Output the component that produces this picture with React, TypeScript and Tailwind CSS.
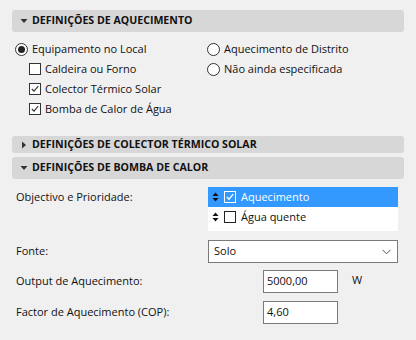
import React from "react";

const font = { fontFamily: '"Segoe UI", "Open Sans", "Noto Sans", sans-serif' };

function Caret({ open }: { open: boolean }) {
  return open ? (
    <svg width="8" height="8" viewBox="0 0 8 8" className="shrink-0">
      <path d="M0.5 2 L7.5 2 L4 6 Z" fill="#333" />
    </svg>
  ) : (
    <svg width="8" height="8" viewBox="0 0 8 8" className="shrink-0">
      <path d="M2 0.5 L6 4 L2 7.5 Z" fill="#333" />
    </svg>
  );
}

function Header({ title, open, h }: { title: string; open: boolean; h: string }) {
  return (
    <div className={`flex items-center gap-[4px] rounded-[3px] bg-[#d7d7d7] pl-[8px] ${h}`}>
      <Caret open={open} />
      <span className="text-[10.6px] font-bold text-[#111]">{title}</span>
    </div>
  );
}

function Radio({ checked, label }: { checked?: boolean; label: string }) {
  return (
    <div className="flex h-5 items-center gap-[4px]">
      <span className="flex h-[13px] w-[13px] items-center justify-center rounded-full border border-[#333] bg-white">
        {checked && <span className="h-[7px] w-[7px] rounded-full bg-[#222]" />}
      </span>
      <span>{label}</span>
    </div>
  );
}

function Check({ checked, label }: { checked?: boolean; label: string }) {
  return (
    <div className="flex h-5 items-center gap-[4px] pl-[14px]">
      <span className="flex h-[12px] w-[12px] items-center justify-center border border-[#333] bg-white">
        {checked && (
          <svg width="10" height="10" viewBox="0 0 10 10">
            <path d="M1.8 5 L4 7.2 L8.2 2.2" stroke="#333" strokeWidth="1.1" fill="none" />
          </svg>
        )}
      </span>
      <span>{label}</span>
    </div>
  );
}

function Updown({ color }: { color: string }) {
  return (
    <svg width="7" height="10" viewBox="0 0 7 10" className="shrink-0">
      <path d="M0.5 4 L3.5 0.5 L6.5 4 Z M0.5 6 L3.5 9.5 L6.5 6 Z" fill={color} />
    </svg>
  );
}

export default function App() {
  return (
    <div style={font} className="h-[340px] w-[416px] bg-[#f0f0f0] px-[12px] pt-[10px] text-[11px] text-[#111]">
      <Header title="DEFINIÇÕES DE AQUECIMENTO" open h="h-[22px]" />

      <div className="mt-[7px] flex pl-[3px]">
        <div className="w-[192px]">
          <Radio checked label="Equipamento no Local" />
          <Check label="Caldeira ou Forno" />
          <Check checked label="Colector Térmico Solar" />
          <Check checked label="Bomba de Calor de Água" />
        </div>
        <div>
          <Radio label="Aquecimento de Distrito" />
          <Radio label="Não ainda especificada" />
        </div>
      </div>

      <div className="mt-[17px]">
        <Header title="DEFINIÇÕES DE COLECTOR TÉRMICO SOLAR" open={false} h="h-[17px]" />
      </div>
      <div className="mt-[4px]">
        <Header title="DEFINIÇÕES DE BOMBA DE CALOR" open h="h-[22px]" />
      </div>

      <div className="mt-[8px] flex">
        <div className="flex h-5 w-[196px] items-center pl-[4px]">Objectivo e Prioridade:</div>
        <div className="h-[44px] w-[190px] bg-white">
          <div className="flex h-5 items-center gap-[5px] bg-[#3399ff] pl-[4px] text-white">
            <Updown color="#111" />
            <span className="flex h-[12px] w-[12px] items-center justify-center border border-white">
              <svg width="10" height="10" viewBox="0 0 10 10">
                <path d="M1.8 5 L4 7.2 L8.2 2.2" stroke="#fff" strokeWidth="1.3" fill="none" />
              </svg>
            </span>
            <span>Aquecimento</span>
          </div>
          <div className="flex h-5 items-center gap-[5px] pl-[4px]">
            <Updown color="#111" />
            <span className="h-[12px] w-[12px] border border-[#222]" />
            <span>Água quente</span>
          </div>
        </div>
      </div>

      <div className="mt-[9px] flex items-center">
        <div className="w-[196px] pl-[4px]">Fonte:</div>
        <div className="flex h-[23px] w-[190px] items-center justify-between border border-[#7a7a7a] bg-white pl-[5px] pr-[6px]">
          <span>Solo</span>
          <svg width="9" height="6" viewBox="0 0 9 6">
            <path d="M0.5 0.8 L4.5 4.8 L8.5 0.8" stroke="#555" strokeWidth="1" fill="none" />
          </svg>
        </div>
      </div>

      <div className="mt-[7px] flex items-center">
        <div className="w-[251px] pl-[4px]">Output de Aquecimento:</div>
        <div className="flex h-[23px] w-[75px] items-center border border-[#7a7a7a] bg-white pl-[3px]">5000,00</div>
        <span className="ml-[14px] -mt-[2px]">W</span>
      </div>

      <div className="mt-[8px] flex items-center">
        <div className="w-[251px] pl-[4px]">Factor de Aquecimento (COP):</div>
        <div className="flex h-[23px] w-[75px] items-center border border-[#7a7a7a] bg-white pl-[3px]">4,60</div>
      </div>
    </div>
  );
}
